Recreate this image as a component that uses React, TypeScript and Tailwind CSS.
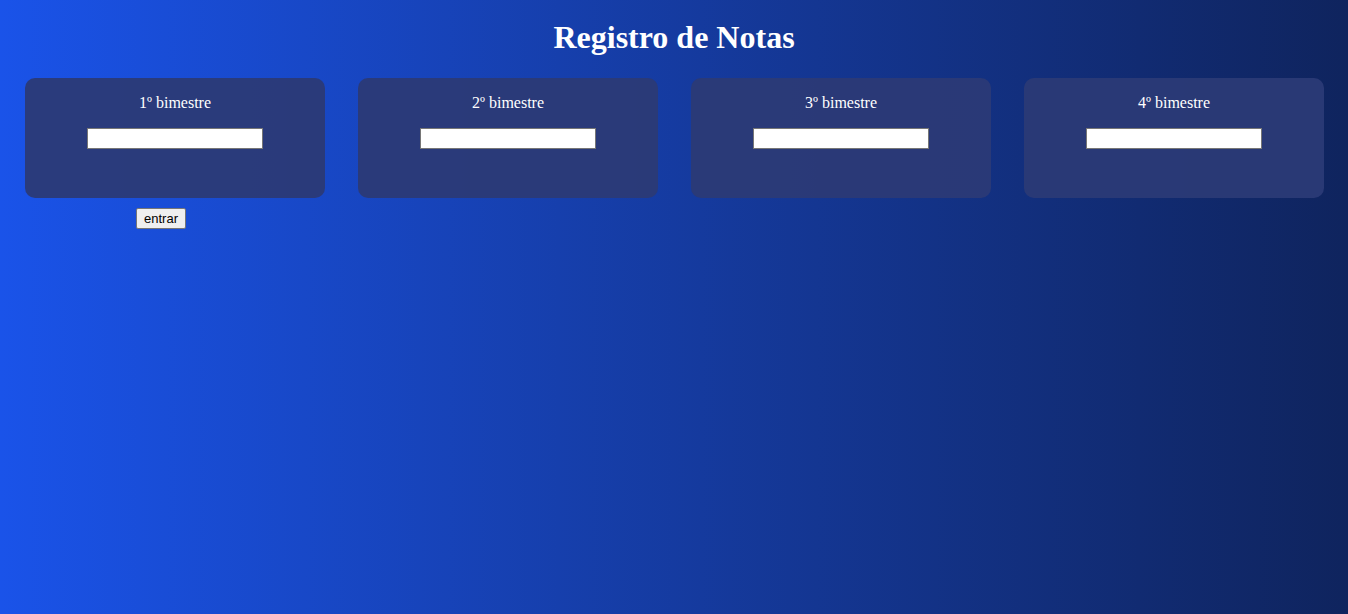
import React from 'react';

const bimestres = ['1º bimestre', '2º bimestre', '3º bimestre', '4º bimestre'];

const App: React.FC = () => {
  return (
    <div
      className="min-h-[614px] w-full bg-gradient-to-r from-[#1a53e9] to-[#0f245e] text-white"
      style={{ fontFamily: '"Liberation Serif", "Times New Roman", serif' }}
    >
      <h1 className="pt-[19px] text-center text-[32px] font-bold leading-[37px]">Registro de Notas</h1>

      <div className="mt-[22px] grid grid-cols-4 gap-[33px] pl-[25px] pr-[24px]">
        {bimestres.map((b) => (
          <div key={b} className="flex h-[120px] flex-col items-center rounded-[10px] bg-[#2b3a76]/95 pt-[16px]">
            <label className="text-[16px] leading-[18px]">{b}</label>
            <input
              type="text"
              className="mt-[16px] h-[21px] w-[176px] border border-[#767676] bg-white px-[2px] text-[13px] text-black outline-none"
            />
          </div>
        ))}
      </div>

      <div className="mt-[8px] pl-[136px]">
        <button
          className="h-[21px] w-[50px] rounded-[2px] border border-[#767676] bg-[#efefef] text-[13px] leading-none text-black"
          style={{ fontFamily: '"Liberation Sans", Arial, sans-serif' }}
        >
          entrar
        </button>
      </div>
    </div>
  );
};

export default App;
